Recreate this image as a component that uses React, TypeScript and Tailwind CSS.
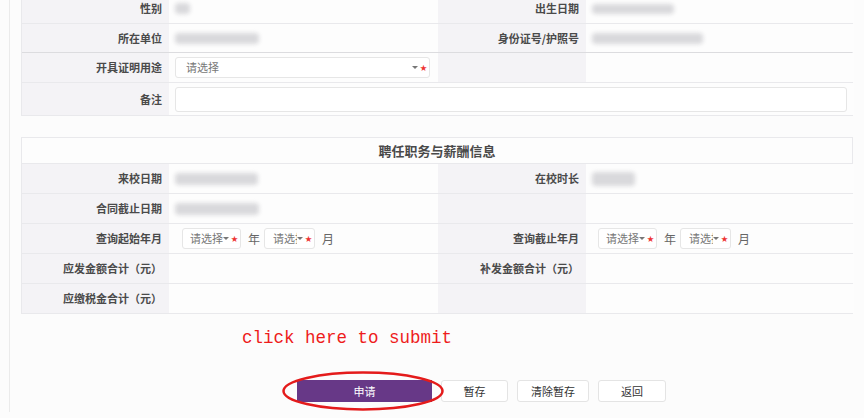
import React from "react";

const FONT = { fontFamily: '"Noto Sans CJK SC", "Noto Sans", sans-serif' };

const Blur = ({ w, h = 11 }: { w: number; h?: number }) => (
  <div className="rounded-sm bg-[#d9d9dc] blur-[2px]" style={{ width: w, height: h }} />
);

const Label = ({ children, h }: { children?: React.ReactNode; h: string }) => (
  <div className={`flex items-center justify-end bg-[#f4f3f6] pr-[7px] text-[11px] font-bold text-[#4a4a4a] ${h}`}>
    {children}
  </div>
);

const Cell = ({ children, h }: { children?: React.ReactNode; h: string }) => (
  <div className={`flex items-center bg-[#fdfdfd] pl-[6px] ${h}`}>{children}</div>
);

const Caret = () => (
  <span className="flex shrink-0 items-center gap-[2px]">
    <span className="h-0 w-0 border-x-[3px] border-t-[3px] border-x-transparent border-t-[#777]" />
    <span className="text-[7px] leading-none text-[#e33]">★</span>
  </span>
);

const Select = ({ w, pl = "pl-[9px]" }: { w: string; pl?: string }) => (
  <div className={`flex h-[21px] items-center rounded-[3px] border border-[#e6e6e6] bg-white pr-[2px] text-[11px] text-[#777] ${pl} ${w}`}>
    <span className="min-w-0 flex-1 overflow-hidden whitespace-nowrap">请选择</span>
    <Caret />
  </div>
);

const YearMonth = () => (
  <div className="flex items-center text-[12px] text-[#666]">
    <Select w="w-[59px]" pl="pl-[7px]" />
    <span className="ml-[7px] mr-[4px]">年</span>
    <Select w="w-[51px]" pl="pl-[8px]" />
    <span className="ml-[7px]">月</span>
  </div>
);

const Row = ({ children, line = "border-[#e9e9ec]" }: { children: React.ReactNode; line?: string }) => (
  <div className={`grid grid-cols-[147px_269px_148px_268px] border-b ${line}`}>{children}</div>
);

export default function App() {
  return (
    <div className="min-h-[418px] overflow-hidden bg-[#fcfcfc]" style={FONT}>
      <div className="ml-[9px] min-h-[418px] border-l border-[#ebebeb] pl-[11px] pr-[11px]">
        {/* basic info */}
        <div className="-mt-[6px] border-x border-[#e9e9ec]">
          <Row>
            <Label h="h-[29px]">性别</Label>
            <Cell h="h-[29px]"><Blur w={15} /></Cell>
            <Label h="h-[29px]">出生日期</Label>
            <Cell h="h-[29px]"><Blur w={82} h={10} /></Cell>
          </Row>
          <Row line="border-[#dcdcdf]">
            <Label h="h-[28px]">所在单位</Label>
            <Cell h="h-[28px]"><Blur w={84} /></Cell>
            <Label h="h-[28px]">身份证号/护照号</Label>
            <Cell h="h-[28px]"><Blur w={111} /></Cell>
          </Row>
          <Row>
            <Label h="h-[29px]">开具证明用途</Label>
            <Cell h="h-[29px]"><Select w="w-[255px]" pl="pl-[10px]" /></Cell>
            <Label h="h-[29px]" />
            <Cell h="h-[29px]" />
          </Row>
          <div className="grid grid-cols-[147px_685px] border-b border-[#e9e9ec]">
            <Label h="h-[32px]">备注</Label>
            <div className="flex h-[32px] items-center bg-[#fdfdfd] pl-[6px] pr-[7px]">
              <div className="h-[25px] w-full rounded-[3px] border border-[#e6e6e6] bg-white" />
            </div>
          </div>
        </div>

        {/* salary info */}
        <div className="mt-[21px] border border-b-0 border-[#e9e9ec]">
          <div className="flex h-[26px] items-center justify-center border-b border-[#e9e9ec] bg-[#fdfdfd] text-[13px] font-bold text-[#4a4a4a]">
            聘任职务与薪酬信息
          </div>
          <Row>
            <Label h="h-[29px]">来校日期</Label>
            <Cell h="h-[29px]"><Blur w={83} h={12} /></Cell>
            <Label h="h-[29px]">在校时长</Label>
            <Cell h="h-[29px]"><Blur w={43} h={14} /></Cell>
          </Row>
          <Row>
            <Label h="h-[29px]">合同截止日期</Label>
            <Cell h="h-[29px]"><Blur w={84} h={12} /></Cell>
            <Label h="h-[29px]" />
            <Cell h="h-[29px]" />
          </Row>
          <Row>
            <Label h="h-[29px]">查询起始年月</Label>
            <Cell h="h-[29px]"><div className="pl-[7px]"><YearMonth /></div></Cell>
            <Label h="h-[29px]">查询截止年月</Label>
            <Cell h="h-[29px]"><div className="pl-[6px]"><YearMonth /></div></Cell>
          </Row>
          <Row>
            <Label h="h-[29px]">应发金额合计（元）</Label>
            <Cell h="h-[29px]" />
            <Label h="h-[29px]">补发金额合计（元）</Label>
            <Cell h="h-[29px]" />
          </Row>
          <Row>
            <Label h="h-[29px]">应缴税金合计（元）</Label>
            <Cell h="h-[29px]" />
            <Label h="h-[29px]" />
            <Cell h="h-[29px]" />
          </Row>
        </div>

        {/* note + actions */}
        <div className="pl-[221px] pt-[13px] text-[17.5px] leading-[22px] text-[#ee1c1c]" style={{ fontFamily: '"Liberation Mono", monospace' }}>
          click here to submit
        </div>

        <div className="relative mt-[31px] flex gap-[9px] pl-[276px] text-[11px]">
          <button className="h-[22px] w-[135px] bg-[#673887] text-white">申请</button>
          <button className="h-[22px] w-[67px] rounded-[3px] border border-[#e4e4e4] bg-white text-[#333]">暂存</button>
          <button className="h-[22px] w-[72px] rounded-[3px] border border-[#e4e4e4] bg-white text-[#333]">清除暂存</button>
          <button className="h-[22px] w-[68px] rounded-[3px] border border-[#e4e4e4] bg-white text-[#333]">返回</button>
          <svg className="pointer-events-none absolute left-[260px] top-[-10px]" width="164" height="42" viewBox="0 0 164 42">
            <ellipse cx="82" cy="21" rx="79.5" ry="18.5" fill="none" stroke="#e41b1b" strokeWidth="2.5" />
          </svg>
        </div>
      </div>
    </div>
  );
}
